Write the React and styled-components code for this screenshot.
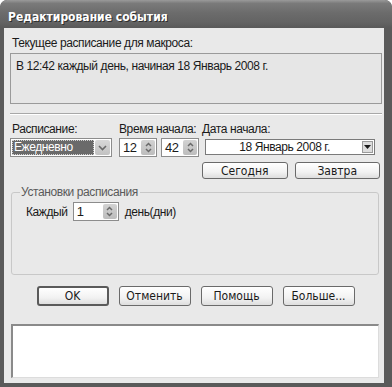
import React from "react";
import styled, { createGlobalStyle } from "styled-components";

const GlobalStyle = createGlobalStyle`
    html, body {
        margin: 0;
        padding: 0;
        background: #ffffff;
    }
    body {
        font-family: "Liberation Sans", Arial, sans-serif;
        font-size: 12px;
        letter-spacing: -0.4px;
        color: #1a1a1a;
    }
`;

const Window = styled.div`
    width: 392px;
    height: 387px;
    box-sizing: border-box;
    display: flex;
    flex-direction: column;
    background: #5a5a5a;
    border-radius: 7px 7px 0 0;
    padding: 0 8px 4px 4px;
    overflow: hidden;
`;

const TitleBar = styled.div`
    height: 28px;
    flex: none;
    margin: 0 -8px 0 -4px;
    padding: 5px 8px 0;
    box-sizing: border-box;
    display: flex;
    align-items: center;
    background: linear-gradient(
        to bottom,
        #9a9a9a 0%,
        #7a7a7a 12%,
        #6c6c6c 45%,
        #636363 80%,
        #595959 100%
    );
    border-radius: 7px 7px 0 0;
`;

const Title = styled.span`
    font-family: "DejaVu Sans Condensed", "Liberation Sans", sans-serif;
    font-weight: bold;
    font-size: 12px;
    letter-spacing: 0;
    color: #ffffff;
    text-shadow: 1px 1px 0 #2e2e2e;
`;

const Client = styled.div`
    flex: 1;
    display: flex;
    flex-direction: column;
    background: #e9e9e9;
    padding: 8px 2px 0 6px;
`;

const Label = styled.div`
    line-height: 14px;
    height: 14px;
    padding-left: ${({ $indent }) => $indent ?? 2}px;
    white-space: nowrap;
`;

const InfoBox = styled.div`
    margin-top: 3px;
    height: 51px;
    box-sizing: border-box;
    border: 1px solid #9a9a9a;
    background: #e6e6e6;
    padding: 5px 5px;
    line-height: 14px;
`;

const Separator = styled.div`
    margin-top: 9px;
    height: 0;
    border-top: 1px solid #a8a8a8;
    border-bottom: 1px solid #ffffff;
`;

const ScheduleGrid = styled.div`
    margin-top: 7px;
    display: grid;
    grid-template-columns: 109px 83px 1fr;
    padding-right: 2px;
`;

const Field = styled.div`
    display: flex;
    flex-direction: column;
    gap: 2px;
`;

const Row = styled.div`
    display: flex;
    align-items: center;
    gap: ${({ $gap }) => $gap || 4}px;
`;

const Combo = styled.div`
    width: 102px;
    height: 19px;
    box-sizing: border-box;
    border: 1px solid #8c8c8c;
    background: #ffffff;
    display: flex;
    align-items: stretch;
    padding: 1px;
`;

const ComboText = styled.div`
    flex: 1;
    background: #6a6a6a;
    color: #ffffff;
    line-height: 15px;
    padding-left: 2px;
    outline: 1px dotted #d0d0d0;
    outline-offset: -1px;
`;

const ArrowButton = styled.div`
    width: 15px;
    flex: none;
    margin-left: 1px;
    background: linear-gradient(to bottom, #d8d8d8, #c2c2c2);
    border-radius: 2px;
    display: flex;
    align-items: center;
    justify-content: center;
`;

const SpinBox = styled.div`
    width: ${({ $w }) => $w}px;
    height: 19px;
    box-sizing: border-box;
    border: 1px solid #8c8c8c;
    background: #ffffff;
    display: flex;
    align-items: stretch;
    padding: 1px;
`;

const SpinValue = styled.div`
    flex: 1;
    line-height: 15px;
    padding-left: 2px;
    font-size: 13px;
`;

const SpinButtons = styled.div`
    width: 14px;
    display: flex;
    flex-direction: column;
    background: linear-gradient(to bottom, #d2d2d2, #bdbdbd);
    border-radius: 2px;
    align-items: center;
    justify-content: space-around;
    padding: 1px 0;
`;

const DatePicker = styled.div`
    margin: 1px 5px 0 3px;
    height: 16px;
    box-sizing: border-box;
    border: 1px solid #7a7a7a;
    background: #ffffff;
    display: flex;
    align-items: stretch;
    padding: 1px;
`;

const DateText = styled.div`
    flex: 1;
    text-align: center;
    line-height: 12px;
`;

const DropButton = styled.div`
    width: 11px;
    flex: none;
    background: #dcdcdc;
    border: 1px solid #9a9a9a;
    box-sizing: border-box;
    display: flex;
    align-items: center;
    justify-content: center;
`;

const DateButtons = styled.div`
    margin-top: 7px;
    display: grid;
    grid-template-columns: 1fr 1fr;
    gap: 7px;
`;

const Button = styled.div`
    height: ${({ $h }) => $h || 17}px;
    width: ${({ $w }) => ($w ? `${$w}px` : "auto")};
    box-sizing: border-box;
    border: ${({ $default }) => ($default ? "2px" : "1px")} solid
        ${({ $default }) => ($default ? "#5a5a5a" : "#6a6a6a")};
    border-radius: 3px;
    background: linear-gradient(to bottom, #ffffff 0%, #f2f2f2 60%, #dedede 100%);
    display: flex;
    align-items: center;
    justify-content: center;
    font-family: "DejaVu Sans Condensed", "Liberation Sans", sans-serif;
    font-size: 12px;
    letter-spacing: 0;
    color: #1a1a1a;
`;

const GroupBox = styled.fieldset`
    margin: 7px 3px 0 1px;
    height: 89px;
    box-sizing: border-box;
    border: 1px solid #c8c8c8;
    border-radius: 3px;
    padding: 4px 0 0 14px;
    min-width: 0;
`;

const Legend = styled.legend`
    color: #5a5a5a;
    padding: 0 2px 0 1px;
    margin-left: -6px;
    line-height: 12px;
`;

const ActionBar = styled.div`
    margin-top: 11px;
    display: flex;
    justify-content: center;
    gap: 10px;
    padding-right: 1px;
`;

const LogBox = styled.div`
    margin: 18px 3px 0 1px;
    height: 54px;
    box-sizing: border-box;
    background: #ffffff;
    border-top: 2px solid #8a8a8a;
    border-left: 2px solid #8a8a8a;
    border-right: 1px solid #dcdcdc;
    border-bottom: 1px solid #dcdcdc;
`;

const Chevron = () => (
    <svg width="9" height="6" viewBox="0 0 9 6">
        <path d="M1 1 L4.5 4.5 L8 1" fill="none" stroke="#6a6a6a" strokeWidth="1.6" />
    </svg>
);

const SmallChevron = ({ dir }) => (
    <svg width="7" height="5" viewBox="0 0 7 5">
        <path
            d={dir === "down" ? "M1 1 L3.5 3.5 L6 1" : "M1 4 L3.5 1.5 L6 4"}
            fill="none"
            stroke="#6a6a6a"
            strokeWidth="1.5"
        />
    </svg>
);

const Spin = ({ value, width }) => (
    <SpinBox $w={width}>
        <SpinValue>{value}</SpinValue>
        <SpinButtons>
            <SmallChevron dir="up" />
            <SmallChevron dir="down" />
        </SpinButtons>
    </SpinBox>
);

const App = () => {
    return (
        <>
            <GlobalStyle />
            <Window>
                <TitleBar>
                    <Title>Редактирование события</Title>
                </TitleBar>
                <Client>
                    <Label>Текущее расписание для макроса:</Label>
                    <InfoBox>В 12:42 каждый день, начиная 18 Январь 2008 г.</InfoBox>
                    <Separator />

                    <ScheduleGrid>
                        <Field>
                            <Label>Расписание:</Label>
                            <Combo>
                                <ComboText>Ежедневно</ComboText>
                                <ArrowButton>
                                    <Chevron />
                                </ArrowButton>
                            </Combo>
                        </Field>
                        <Field>
                            <Label $indent={0}>Время начала:</Label>
                            <Row $gap={4}>
                                <Spin value="12" width={38} />
                                <Spin value="42" width={38} />
                            </Row>
                        </Field>
                        <Field>
                            <Label $indent={0}>Дата начала:</Label>
                            <div>
                                <DatePicker>
                                    <DateText>18 Январь 2008 г.</DateText>
                                    <DropButton>
                                        <svg width="7" height="4" viewBox="0 0 7 4">
                                            <path d="M0 0 L7 0 L3.5 4 Z" fill="#1a1a1a" />
                                        </svg>
                                    </DropButton>
                                </DatePicker>
                                <DateButtons>
                                    <Button>Сегодня</Button>
                                    <Button>Завтра</Button>
                                </DateButtons>
                            </div>
                        </Field>
                    </ScheduleGrid>

                    <GroupBox>
                        <Legend>Установки расписания</Legend>
                        <Row $gap={5}>
                            <span>Каждый</span>
                            <Spin value="1" width={46} />
                            <span style={{ marginLeft: 1 }}>день(дни)</span>
                        </Row>
                    </GroupBox>

                    <ActionBar>
                        <Button $default $w={72} $h={20}>
                            OK
                        </Button>
                        <Button $w={72} $h={20}>
                            Отменить
                        </Button>
                        <Button $w={72} $h={20}>
                            Помощь
                        </Button>
                        <Button $w={72} $h={20}>
                            Больше...
                        </Button>
                    </ActionBar>

                    <LogBox />
                </Client>
            </Window>
        </>
    );
};

export default App;
